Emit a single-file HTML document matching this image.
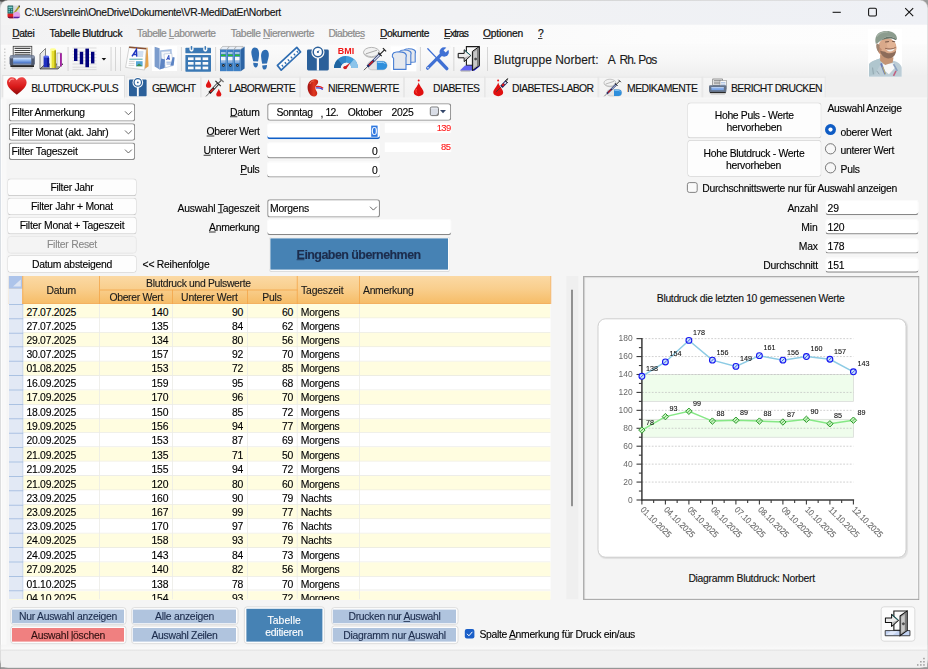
<!DOCTYPE html>
<html lang="de"><head><meta charset="utf-8"><title>VR-MediDatEr</title>
<style>
html,body{margin:0;padding:0;}
body{width:928px;height:669px;overflow:hidden;background:#969696;position:relative;font-family:"Liberation Sans",sans-serif;}
#stage{position:absolute;left:0;top:0;width:1160px;height:836.25px;transform:scale(.8);transform-origin:0 0;font-size:12px;color:#000;}
#stage div{position:absolute;box-sizing:border-box;}
#stage svg{position:absolute;overflow:visible;}
.t{white-space:nowrap;line-height:1;-webkit-text-stroke:0.15px currentColor;}
u{text-decoration:underline;text-underline-offset:1px;}
.combo{background:#fff;border-radius:3.5px;box-shadow:inset 0 0 0 1.35px #8c8c8c;}
.inp{background:#fff;border-radius:3px;box-shadow:inset 0 -1.5px 0 #878787, inset 0 0 0 1px #fafafa;}
.btn{background:#fdfdfd;border:1px solid #d4d4d4;border-bottom-color:#c2c2c2;border-radius:4.5px;}
.fbtn{border:1px solid #d6d6d6;border-radius:4px;background:#fdfdfd;}

</style></head><body>
<div id="stage">
<div style="left:0;top:0;width:1160px;height:1.5px;background:linear-gradient(90deg,#4e4e4e,#5c5c5c 60%,#9c9c9c)"></div>
<div style="left:0;top:1.6px;width:1.4px;height:834px;background:linear-gradient(#b0b4b8 0%,#8a96a4 15%,#6888a8 30%,#707880 50%,#8a8a8a 100%)"></div>
<div class="win" style="left:1.25px;top:1.25px;width:1157.5px;height:832.75px;background:#f5f5f5;border-radius:9px;overflow:hidden;box-shadow:0 0 0 1px rgba(255,255,255,.6);"></div>
<div style="left:1.25px;top:1.25px;width:1157.5px;height:29.25px;background:linear-gradient(90deg,#f3f3f4 0%,#f1f2f4 50%,#eef0f5 100%);border-radius:9px 9px 0 0;"></div>
<div class="t" style="letter-spacing:-0.476px;left:30.62px;top:15.5px;transform:translateY(-50%);font-size:13px;color:#111;">C:\Users\nrein\OneDrive\Dokumente\VR-MediDatEr\Norbert</div>
<div style="left:1.25px;top:30.5px;width:1157.5px;height:25.12px;background:linear-gradient(90deg,#f2f2f3 0%,#f6f6f7 30%,#fcfcfc 70%,#fdfdfd 100%);"></div>
<div style="left:1.25px;top:55.62px;width:1157.5px;height:37.5px;background:linear-gradient(#fbfbfb 0%,#f8f8f8 40%,#f0f0f0 100%);"></div>
<div style="left:1.25px;top:93.12px;width:1157.5px;height:28.87px;background:#efefef;"></div>
<div style="left:1.25px;top:124.25px;width:1.75px;height:688.75px;background:#fdfdfd;"></div>
<div style="left:3.0px;top:124.25px;width:5.0px;height:688.75px;background:#f9f9f9;"></div>
<div class="t" style="letter-spacing:-0.478px;left:15.38px;top:42.75px;transform:translateY(-50%);font-size:12.8px;-webkit-text-stroke:0.28px currentColor;color:#101010;"><u>D</u>atei</div>
<div class="t" style="letter-spacing:-0.387px;left:61.88px;top:42.75px;transform:translateY(-50%);font-size:12.8px;-webkit-text-stroke:0.28px currentColor;color:#101010;">Tabelle Blutdruck</div>
<div class="t" style="letter-spacing:-0.549px;left:171.25px;top:42.75px;transform:translateY(-50%);font-size:12.8px;-webkit-text-stroke:0.28px currentColor;color:#8c8c8c;">Tabelle <u>L</u>aborwerte</div>
<div class="t" style="letter-spacing:-0.479px;left:288.5px;top:42.75px;transform:translateY(-50%);font-size:12.8px;-webkit-text-stroke:0.28px currentColor;color:#8c8c8c;">Tabelle <u>N</u>ierenwerte</div>
<div class="t" style="letter-spacing:-0.689px;left:410.62px;top:42.75px;transform:translateY(-50%);font-size:12.8px;-webkit-text-stroke:0.28px currentColor;color:#8c8c8c;">Diabete<u>s</u></div>
<div class="t" style="letter-spacing:-0.467px;left:475.0px;top:42.75px;transform:translateY(-50%);font-size:12.8px;-webkit-text-stroke:0.28px currentColor;color:#101010;"><u>D</u>okumente</div>
<div class="t" style="letter-spacing:-1.047px;left:555.0px;top:42.75px;transform:translateY(-50%);font-size:12.8px;-webkit-text-stroke:0.28px currentColor;color:#101010;"><u>E</u>xtras</div>
<div class="t" style="letter-spacing:-0.244px;left:603.75px;top:42.75px;transform:translateY(-50%);font-size:12.8px;-webkit-text-stroke:0.28px currentColor;color:#101010;"><u>O</u>ptionen</div>
<div class="t" style="letter-spacing:-1.600px;left:672.5px;top:42.75px;transform:translateY(-50%);font-size:12.8px;-webkit-text-stroke:0.28px currentColor;color:#101010;"><u>?</u></div>
<div class="t" style="letter-spacing:-0.001px;left:617.25px;top:74.5px;transform:translateY(-50%);font-size:15px;color:#1a1a1a;">Blutgruppe Norbert:</div>
<div class="t" style="letter-spacing:0.734px;left:759.75px;top:74.5px;transform:translateY(-50%);font-size:15px;color:#1a1a1a;">A</div>
<div class="t" style="letter-spacing:-1.198px;left:774.5px;top:74.5px;transform:translateY(-50%);font-size:15px;color:#1a1a1a;">Rh.</div>
<div class="t" style="letter-spacing:-0.953px;left:797.75px;top:74.5px;transform:translateY(-50%);font-size:15px;color:#1a1a1a;">Pos</div>
<div style="left:157.5px;top:95.75px;width:93.0px;height:26.0px;background:linear-gradient(#f5f5f5,#f2f2f2);border:1px solid #e6e6e6;border-bottom:none;"></div>
<div class="t" style="letter-spacing:-1.056px;left:190.0px;top:109.62px;transform:translateY(-50%);font-size:13px;color:#111;">GEWICHT</div>
<div style="left:250.5px;top:95.75px;width:124.0px;height:26.0px;background:linear-gradient(#f5f5f5,#f2f2f2);border:1px solid #e6e6e6;border-bottom:none;"></div>
<div class="t" style="letter-spacing:-0.805px;left:286.25px;top:109.62px;transform:translateY(-50%);font-size:13px;color:#111;">LABORWERTE</div>
<div style="left:374.5px;top:95.75px;width:130.0px;height:26.0px;background:linear-gradient(#f5f5f5,#f2f2f2);border:1px solid #e6e6e6;border-bottom:none;"></div>
<div class="t" style="letter-spacing:-0.643px;left:410.0px;top:109.62px;transform:translateY(-50%);font-size:13px;color:#111;">NIERENWERTE</div>
<div style="left:504.5px;top:95.75px;width:101.0px;height:26.0px;background:linear-gradient(#f5f5f5,#f2f2f2);border:1px solid #e6e6e6;border-bottom:none;"></div>
<div class="t" style="letter-spacing:-0.787px;left:541.25px;top:109.62px;transform:translateY(-50%);font-size:13px;color:#111;">DIABETES</div>
<div style="left:605.5px;top:95.75px;width:142.5px;height:26.0px;background:linear-gradient(#f5f5f5,#f2f2f2);border:1px solid #e6e6e6;border-bottom:none;"></div>
<div class="t" style="letter-spacing:-0.782px;left:640.0px;top:109.62px;transform:translateY(-50%);font-size:13px;color:#111;">DIABETES-LABOR</div>
<div style="left:748.0px;top:95.75px;width:130.25px;height:26.0px;background:linear-gradient(#f5f5f5,#f2f2f2);border:1px solid #e6e6e6;border-bottom:none;"></div>
<div class="t" style="letter-spacing:-0.668px;left:783.75px;top:109.62px;transform:translateY(-50%);font-size:13px;color:#111;">MEDIKAMENTE</div>
<div style="left:878.25px;top:95.75px;width:153.75px;height:26.0px;background:linear-gradient(#f5f5f5,#f2f2f2);border:1px solid #e6e6e6;border-bottom:none;"></div>
<div class="t" style="letter-spacing:-0.731px;left:913.75px;top:109.62px;transform:translateY(-50%);font-size:13px;color:#111;">BERICHT DRUCKEN</div>
<div style="left:2.75px;top:94.0px;width:152.75px;height:29.0px;background:#fbfbfb;border:1px solid #dadada;border-bottom:none;"></div>
<div class="t" style="letter-spacing:-0.643px;left:39.0px;top:109.62px;transform:translateY(-50%);font-size:13px;color:#111;">BLUTDRUCK-PULS</div>
<div style="left:1.25px;top:121.75px;width:1157.5px;height:1.25px;background:#fafafa;"></div>
<div style="left:3.25px;top:121.5px;width:151.75px;height:1.75px;background:#fbfbfb;"></div>
<div class="combo" style="left:11.25px;top:129.38px;width:157.5px;height:23.12px;"></div>
<div class="t" style="letter-spacing:-0.407px;left:14.25px;top:141.19px;transform:translateY(-50%);font-size:13px;color:#000;">Filter Anmerkung</div>
<div class="combo" style="left:11.25px;top:153.5px;width:157.5px;height:22.75px;"></div>
<div class="t" style="letter-spacing:-0.396px;left:14.25px;top:165.12px;transform:translateY(-50%);font-size:13px;color:#000;">Filter Monat (akt. Jahr)</div>
<div class="combo" style="left:11.25px;top:177.5px;width:157.5px;height:22.5px;"></div>
<div class="t" style="letter-spacing:-0.277px;left:14.25px;top:189.0px;transform:translateY(-50%);font-size:13px;color:#000;">Filter Tageszeit</div>
<div class="btn" style="left:9.25px;top:222.75px;width:161.5px;height:22.25px;"></div>
<div class="t" style="letter-spacing:-0.368px;left:63.12px;top:234.25px;transform:translateY(-50%);font-size:13px;color:#000;">Filter Jahr</div>
<div class="btn" style="left:9.25px;top:247.0px;width:161.5px;height:21.75px;"></div>
<div class="t" style="letter-spacing:-0.329px;left:38.75px;top:258.25px;transform:translateY(-50%);font-size:13px;color:#000;">Filter Jahr + Monat</div>
<div class="btn" style="left:9.25px;top:271.0px;width:161.5px;height:21.75px;"></div>
<div class="t" style="letter-spacing:-0.308px;left:24.63px;top:282.25px;transform:translateY(-50%);font-size:13px;color:#000;">Filter Monat + Tageszeit</div>
<div class="btn" style="left:9.25px;top:295.0px;width:161.5px;height:21.5px;background:#f4f4f4;border-color:#e4e4e4;"></div>
<div class="t" style="letter-spacing:-0.331px;left:58.75px;top:306.12px;transform:translateY(-50%);font-size:13px;color:#000;color:#8a8a8a;">Filter Reset</div>
<div class="btn" style="left:9.25px;top:319.0px;width:161.5px;height:21.5px;"></div>
<div class="t" style="letter-spacing:-0.345px;left:40.0px;top:330.12px;transform:translateY(-50%);font-size:13px;color:#000;">Datum absteigend</div>
<div class="t" style="letter-spacing:-0.335px;left:178.25px;top:330.75px;transform:translateY(-50%);font-size:13px;color:#000;">&lt;&lt; Reihenfolge</div>
<div class="t" style="letter-spacing:-0.259px;left:287.5px;top:140.0px;transform:translateY(-50%);font-size:13px;color:#000;"><u>D</u>atum</div>
<div class="t" style="letter-spacing:-0.459px;left:258.25px;top:164.0px;transform:translateY(-50%);font-size:13px;color:#000;"><u>O</u>berer Wert</div>
<div class="t" style="letter-spacing:-0.348px;left:254.5px;top:188.0px;transform:translateY(-50%);font-size:13px;color:#000;"><u>U</u>nterer Wert</div>
<div class="t" style="letter-spacing:-0.262px;left:300.25px;top:212.0px;transform:translateY(-50%);font-size:13px;color:#000;"><u>P</u>uls</div>
<div class="t" style="letter-spacing:-0.290px;left:222.0px;top:260.0px;transform:translateY(-50%);font-size:13px;color:#000;">Auswahl <u>T</u>ageszeit</div>
<div class="t" style="letter-spacing:-0.359px;left:261.25px;top:283.75px;transform:translateY(-50%);font-size:13px;color:#000;"><u>A</u>nmerkung</div>
<div class="combo" style="left:334.0px;top:129.38px;width:230.0px;height:21.13px;"></div>
<div class="t" style="letter-spacing:-0.455px;left:345.5px;top:140.75px;transform:translateY(-50%);font-size:13px;color:#000;">Sonntag</div>
<div class="t" style="letter-spacing:-1.600px;left:400.75px;top:141.75px;transform:translateY(-50%);font-size:13px;color:#000;">,</div>
<div class="t" style="letter-spacing:-0.776px;left:406.75px;top:140.75px;transform:translateY(-50%);font-size:13px;color:#000;">12.</div>
<div class="t" style="letter-spacing:-0.500px;left:434.75px;top:140.75px;transform:translateY(-50%);font-size:13px;color:#000;">Oktober</div>
<div class="t" style="letter-spacing:-0.355px;left:489.5px;top:140.75px;transform:translateY(-50%);font-size:13px;color:#000;">2025</div>
<div class="inp" style="left:334.0px;top:154.0px;width:141.0px;height:20.0px;box-shadow:inset 0 -2px 0 #0f5fc8, inset 0 0 0 1px #fafafa;"></div>
<div style="left:464.0px;top:156.88px;width:7.75px;height:14.13px;background:#2f78e0;"></div>
<div class="t" style="left:464.5px;top:164.25px;transform:translateY(-50%);font-size:13px;color:#fff;">0</div>
<div class="inp" style="left:334.0px;top:177.88px;width:141.0px;height:20.5px;"></div>
<div class="inp" style="left:334.0px;top:201.88px;width:141.0px;height:20.0px;"></div>
<div class="t" style="right:687.88px;top:188.62px;transform:translateY(-50%);font-size:13px;">0</div>
<div class="t" style="right:687.88px;top:212.62px;transform:translateY(-50%);font-size:13px;">0</div>
<div style="left:480.75px;top:154.25px;width:83.0px;height:12.0px;background:#fff;"></div>
<div style="left:480.75px;top:178.25px;width:83.0px;height:12.0px;background:#fff;"></div>
<div class="t" style="letter-spacing:-0.856px;left:546.0px;top:160.88px;transform:translateY(-50%);font-size:11.8px;color:#ff2020;">139</div>
<div class="t" style="letter-spacing:-0.562px;left:551.12px;top:184.88px;transform:translateY(-50%);font-size:11.8px;color:#ff2020;">85</div>
<div class="combo" style="left:334.0px;top:248.75px;width:141.0px;height:22.75px;"></div>
<div class="t" style="letter-spacing:-0.261px;left:337.5px;top:260.38px;transform:translateY(-50%);font-size:13px;color:#000;">Morgens</div>
<div class="inp" style="left:334.0px;top:273.5px;width:229.75px;height:20.0px;"></div>
<div style="left:335.5px;top:295.5px;width:227.25px;height:44.0px;background:#fbfbfb;border:1px solid #e4e4e4;border-bottom-color:#d4d4d4;border-radius:4px;"></div>
<div style="left:338.25px;top:297.75px;width:221.5px;height:39.25px;background:#4682b4;"></div>
<div class="t" style="letter-spacing:-0.690px;left:370.75px;top:318.0px;transform:translateY(-50%);font-size:15.6px;font-weight:bold;color:#1c2c4c;"><u>E</u>ingaben übernehmen</div>
<div class="btn" style="left:858.5px;top:127.75px;width:168.75px;height:45.5px;"></div>
<div class="t" style="letter-spacing:-0.425px;left:893.5px;top:143.75px;transform:translateY(-50%);font-size:13px;color:#000;">Hohe Puls - Werte</div>
<div class="t" style="letter-spacing:-0.386px;left:908.25px;top:158.75px;transform:translateY(-50%);font-size:13px;color:#000;">hervorheben</div>
<div class="btn" style="left:858.5px;top:175.25px;width:168.75px;height:45.75px;"></div>
<div class="t" style="letter-spacing:-0.403px;left:879.5px;top:191.75px;transform:translateY(-50%);font-size:13px;color:#000;">Hohe Blutdruck - Werte</div>
<div class="t" style="letter-spacing:-0.386px;left:907.5px;top:206.5px;transform:translateY(-50%);font-size:13px;color:#000;">hervorheben</div>
<div class="t" style="letter-spacing:-0.418px;left:1034.25px;top:135.25px;transform:translateY(-50%);font-size:13px;color:#000;">Auswahl Anzeige</div>
<div class="t" style="letter-spacing:-0.423px;left:1050.75px;top:164.5px;transform:translateY(-50%);font-size:13px;color:#000;">oberer Wert</div>
<div class="t" style="letter-spacing:-0.439px;left:1050.75px;top:188.0px;transform:translateY(-50%);font-size:13px;color:#000;">unterer Wert</div>
<div class="t" style="letter-spacing:-0.324px;left:1050.75px;top:212.0px;transform:translateY(-50%);font-size:13px;color:#000;">Puls</div>
<div class="t" style="letter-spacing:-0.387px;left:877.75px;top:234.75px;transform:translateY(-50%);font-size:13px;color:#000;">Durchschnittswerte nur für Auswahl anzeigen</div>
<div class="inp" style="left:1032.25px;top:250.0px;width:116.0px;height:19.25px;"></div>
<div class="t" style="letter-spacing:-0.292px;left:984.25px;top:260.12px;transform:translateY(-50%);font-size:13px;color:#000;">Anzahl</div>
<div class="t" style="left:1034.5px;top:260.38px;transform:translateY(-50%);font-size:13px;letter-spacing:-0.3px;">29</div>
<div class="inp" style="left:1032.25px;top:274.12px;width:116.0px;height:19.12px;"></div>
<div class="t" style="letter-spacing:-0.068px;left:1001.5px;top:284.19px;transform:translateY(-50%);font-size:13px;color:#000;">Min</div>
<div class="t" style="left:1034.5px;top:284.44px;transform:translateY(-50%);font-size:13px;letter-spacing:-0.3px;">120</div>
<div class="inp" style="left:1032.25px;top:298.0px;width:116.0px;height:19.12px;"></div>
<div class="t" style="letter-spacing:-0.271px;left:998.5px;top:308.06px;transform:translateY(-50%);font-size:13px;color:#000;">Max</div>
<div class="t" style="left:1034.5px;top:308.31px;transform:translateY(-50%);font-size:13px;letter-spacing:-0.3px;">178</div>
<div class="inp" style="left:1032.25px;top:321.88px;width:116.0px;height:19.38px;"></div>
<div class="t" style="letter-spacing:-0.333px;left:954.0px;top:332.06px;transform:translateY(-50%);font-size:13px;color:#000;">Durchschnitt</div>
<div class="t" style="left:1034.5px;top:332.31px;transform:translateY(-50%);font-size:13px;letter-spacing:-0.3px;">151</div>
<div class="grid" style="left:11.25px;top:344.5px;width:677.0px;height:404.75px;background:#fff;overflow:hidden;"></div>
<div style="left:11.25px;top:344.5px;width:677.0px;height:35.5px;background:linear-gradient(#fbd9a4 0%,#f9cf8e 45%,#f6bd68 100%);border-bottom:1px solid #f0a040;"></div>
<div style="left:11.25px;top:344.5px;width:17.0px;height:16.75px;background:#adc4ea;"></div>
<div style="left:11.25px;top:361.25px;width:17.0px;height:18.75px;background:#e3eaf6;"></div>
<div style="left:28.0px;top:344.5px;width:1.0px;height:35.5px;background:#f3a64a;"></div>
<div style="left:124.25px;top:344.5px;width:1.0px;height:35.5px;background:#f3a64a;"></div>
<div style="left:371.25px;top:344.5px;width:1.0px;height:35.5px;background:#f3a64a;"></div>
<div style="left:448.5px;top:344.5px;width:1.0px;height:35.5px;background:#f3a64a;"></div>
<div style="left:687.5px;top:344.5px;width:1.0px;height:35.5px;background:#f3a64a;"></div>
<div style="left:215.25px;top:362.25px;width:1.0px;height:17.75px;background:#f3a64a;"></div>
<div style="left:308.75px;top:362.25px;width:1.0px;height:17.75px;background:#f3a64a;"></div>
<div style="left:124.75px;top:361.75px;width:247.0px;height:1.0px;background:#f3a64a;"></div>
<div class="t" style="letter-spacing:-0.259px;left:58.0px;top:363.25px;transform:translateY(-50%);font-size:13px;color:#1a1a1a;">Datum</div>
<div class="t" style="letter-spacing:-0.410px;left:182.63px;top:353.75px;transform:translateY(-50%);font-size:13px;color:#1a1a1a;">Blutdruck und Pulswerte</div>
<div class="t" style="letter-spacing:-0.389px;left:136.75px;top:371.75px;transform:translateY(-50%);font-size:13px;color:#1a1a1a;">Oberer Wert</div>
<div class="t" style="letter-spacing:-0.285px;left:226.38px;top:371.75px;transform:translateY(-50%);font-size:13px;color:#1a1a1a;">Unterer Wert</div>
<div class="t" style="letter-spacing:-0.262px;left:327.88px;top:371.75px;transform:translateY(-50%);font-size:13px;color:#1a1a1a;">Puls</div>
<div class="t" style="letter-spacing:-0.214px;left:376.25px;top:363.25px;transform:translateY(-50%);font-size:13px;color:#1a1a1a;">Tageszeit</div>
<div class="t" style="letter-spacing:-0.387px;left:453.75px;top:363.25px;transform:translateY(-50%);font-size:13px;color:#1a1a1a;">Anmerkung</div>
<div style="left:11.25px;top:344.5px;width:677.0px;height:404.75px;overflow:hidden;font-size:13px;letter-spacing:-0.31px;"><div style="left:0;top:35.75px;width:677.0px;height:17.91px;background:#fffde0;border-bottom:1px solid #e9e9e4;"><div class="t" style="left:21.75px;top:50%;transform:translateY(-42%);">27.07.2025</div><div class="t" style="right:478.0px;top:50%;transform:translateY(-42%);">140</div><div class="t" style="right:384.5px;top:50%;transform:translateY(-42%);">90</div><div class="t" style="right:322.0px;top:50%;transform:translateY(-42%);">60</div><div class="t" style="left:364.75px;top:50%;transform:translateY(-42%);">Morgens</div></div><div style="left:0;top:53.66px;width:677.0px;height:17.91px;background:#ffffff;border-bottom:1px solid #e9e9e4;"><div class="t" style="left:21.75px;top:50%;transform:translateY(-42%);">27.07.2025</div><div class="t" style="right:478.0px;top:50%;transform:translateY(-42%);">135</div><div class="t" style="right:384.5px;top:50%;transform:translateY(-42%);">84</div><div class="t" style="right:322.0px;top:50%;transform:translateY(-42%);">62</div><div class="t" style="left:364.75px;top:50%;transform:translateY(-42%);">Morgens</div></div><div style="left:0;top:71.57px;width:677.0px;height:17.91px;background:#fffde0;border-bottom:1px solid #e9e9e4;"><div class="t" style="left:21.75px;top:50%;transform:translateY(-42%);">29.07.2025</div><div class="t" style="right:478.0px;top:50%;transform:translateY(-42%);">134</div><div class="t" style="right:384.5px;top:50%;transform:translateY(-42%);">80</div><div class="t" style="right:322.0px;top:50%;transform:translateY(-42%);">56</div><div class="t" style="left:364.75px;top:50%;transform:translateY(-42%);">Morgens</div></div><div style="left:0;top:89.49px;width:677.0px;height:17.91px;background:#ffffff;border-bottom:1px solid #e9e9e4;"><div class="t" style="left:21.75px;top:50%;transform:translateY(-42%);">30.07.2025</div><div class="t" style="right:478.0px;top:50%;transform:translateY(-42%);">157</div><div class="t" style="right:384.5px;top:50%;transform:translateY(-42%);">92</div><div class="t" style="right:322.0px;top:50%;transform:translateY(-42%);">70</div><div class="t" style="left:364.75px;top:50%;transform:translateY(-42%);">Morgens</div></div><div style="left:0;top:107.4px;width:677.0px;height:17.91px;background:#fffde0;border-bottom:1px solid #e9e9e4;"><div class="t" style="left:21.75px;top:50%;transform:translateY(-42%);">01.08.2025</div><div class="t" style="right:478.0px;top:50%;transform:translateY(-42%);">153</div><div class="t" style="right:384.5px;top:50%;transform:translateY(-42%);">72</div><div class="t" style="right:322.0px;top:50%;transform:translateY(-42%);">85</div><div class="t" style="left:364.75px;top:50%;transform:translateY(-42%);">Morgens</div></div><div style="left:0;top:125.31px;width:677.0px;height:17.91px;background:#ffffff;border-bottom:1px solid #e9e9e4;"><div class="t" style="left:21.75px;top:50%;transform:translateY(-42%);">16.09.2025</div><div class="t" style="right:478.0px;top:50%;transform:translateY(-42%);">159</div><div class="t" style="right:384.5px;top:50%;transform:translateY(-42%);">95</div><div class="t" style="right:322.0px;top:50%;transform:translateY(-42%);">68</div><div class="t" style="left:364.75px;top:50%;transform:translateY(-42%);">Morgens</div></div><div style="left:0;top:143.22px;width:677.0px;height:17.91px;background:#fffde0;border-bottom:1px solid #e9e9e4;"><div class="t" style="left:21.75px;top:50%;transform:translateY(-42%);">17.09.2025</div><div class="t" style="right:478.0px;top:50%;transform:translateY(-42%);">170</div><div class="t" style="right:384.5px;top:50%;transform:translateY(-42%);">96</div><div class="t" style="right:322.0px;top:50%;transform:translateY(-42%);">70</div><div class="t" style="left:364.75px;top:50%;transform:translateY(-42%);">Morgens</div></div><div style="left:0;top:161.14px;width:677.0px;height:17.91px;background:#ffffff;border-bottom:1px solid #e9e9e4;"><div class="t" style="left:21.75px;top:50%;transform:translateY(-42%);">18.09.2025</div><div class="t" style="right:478.0px;top:50%;transform:translateY(-42%);">150</div><div class="t" style="right:384.5px;top:50%;transform:translateY(-42%);">85</div><div class="t" style="right:322.0px;top:50%;transform:translateY(-42%);">72</div><div class="t" style="left:364.75px;top:50%;transform:translateY(-42%);">Morgens</div></div><div style="left:0;top:179.05px;width:677.0px;height:17.91px;background:#fffde0;border-bottom:1px solid #e9e9e4;"><div class="t" style="left:21.75px;top:50%;transform:translateY(-42%);">19.09.2025</div><div class="t" style="right:478.0px;top:50%;transform:translateY(-42%);">156</div><div class="t" style="right:384.5px;top:50%;transform:translateY(-42%);">94</div><div class="t" style="right:322.0px;top:50%;transform:translateY(-42%);">77</div><div class="t" style="left:364.75px;top:50%;transform:translateY(-42%);">Morgens</div></div><div style="left:0;top:196.96px;width:677.0px;height:17.91px;background:#ffffff;border-bottom:1px solid #e9e9e4;"><div class="t" style="left:21.75px;top:50%;transform:translateY(-42%);">20.09.2025</div><div class="t" style="right:478.0px;top:50%;transform:translateY(-42%);">153</div><div class="t" style="right:384.5px;top:50%;transform:translateY(-42%);">87</div><div class="t" style="right:322.0px;top:50%;transform:translateY(-42%);">69</div><div class="t" style="left:364.75px;top:50%;transform:translateY(-42%);">Morgens</div></div><div style="left:0;top:214.87px;width:677.0px;height:17.91px;background:#fffde0;border-bottom:1px solid #e9e9e4;"><div class="t" style="left:21.75px;top:50%;transform:translateY(-42%);">21.09.2025</div><div class="t" style="right:478.0px;top:50%;transform:translateY(-42%);">135</div><div class="t" style="right:384.5px;top:50%;transform:translateY(-42%);">71</div><div class="t" style="right:322.0px;top:50%;transform:translateY(-42%);">50</div><div class="t" style="left:364.75px;top:50%;transform:translateY(-42%);">Morgens</div></div><div style="left:0;top:232.79px;width:677.0px;height:17.91px;background:#ffffff;border-bottom:1px solid #e9e9e4;"><div class="t" style="left:21.75px;top:50%;transform:translateY(-42%);">21.09.2025</div><div class="t" style="right:478.0px;top:50%;transform:translateY(-42%);">155</div><div class="t" style="right:384.5px;top:50%;transform:translateY(-42%);">94</div><div class="t" style="right:322.0px;top:50%;transform:translateY(-42%);">72</div><div class="t" style="left:364.75px;top:50%;transform:translateY(-42%);">Morgens</div></div><div style="left:0;top:250.7px;width:677.0px;height:17.91px;background:#fffde0;border-bottom:1px solid #e9e9e4;"><div class="t" style="left:21.75px;top:50%;transform:translateY(-42%);">21.09.2025</div><div class="t" style="right:478.0px;top:50%;transform:translateY(-42%);">120</div><div class="t" style="right:384.5px;top:50%;transform:translateY(-42%);">80</div><div class="t" style="right:322.0px;top:50%;transform:translateY(-42%);">60</div><div class="t" style="left:364.75px;top:50%;transform:translateY(-42%);">Morgens</div></div><div style="left:0;top:268.61px;width:677.0px;height:17.91px;background:#ffffff;border-bottom:1px solid #e9e9e4;"><div class="t" style="left:21.75px;top:50%;transform:translateY(-42%);">23.09.2025</div><div class="t" style="right:478.0px;top:50%;transform:translateY(-42%);">160</div><div class="t" style="right:384.5px;top:50%;transform:translateY(-42%);">90</div><div class="t" style="right:322.0px;top:50%;transform:translateY(-42%);">79</div><div class="t" style="left:364.75px;top:50%;transform:translateY(-42%);">Nachts</div></div><div style="left:0;top:286.52px;width:677.0px;height:17.91px;background:#fffde0;border-bottom:1px solid #e9e9e4;"><div class="t" style="left:21.75px;top:50%;transform:translateY(-42%);">23.09.2025</div><div class="t" style="right:478.0px;top:50%;transform:translateY(-42%);">167</div><div class="t" style="right:384.5px;top:50%;transform:translateY(-42%);">99</div><div class="t" style="right:322.0px;top:50%;transform:translateY(-42%);">77</div><div class="t" style="left:364.75px;top:50%;transform:translateY(-42%);">Nachts</div></div><div style="left:0;top:304.44px;width:677.0px;height:17.91px;background:#ffffff;border-bottom:1px solid #e9e9e4;"><div class="t" style="left:21.75px;top:50%;transform:translateY(-42%);">23.09.2025</div><div class="t" style="right:478.0px;top:50%;transform:translateY(-42%);">170</div><div class="t" style="right:384.5px;top:50%;transform:translateY(-42%);">97</div><div class="t" style="right:322.0px;top:50%;transform:translateY(-42%);">76</div><div class="t" style="left:364.75px;top:50%;transform:translateY(-42%);">Nachts</div></div><div style="left:0;top:322.35px;width:677.0px;height:17.91px;background:#fffde0;border-bottom:1px solid #e9e9e4;"><div class="t" style="left:21.75px;top:50%;transform:translateY(-42%);">24.09.2025</div><div class="t" style="right:478.0px;top:50%;transform:translateY(-42%);">158</div><div class="t" style="right:384.5px;top:50%;transform:translateY(-42%);">93</div><div class="t" style="right:322.0px;top:50%;transform:translateY(-42%);">79</div><div class="t" style="left:364.75px;top:50%;transform:translateY(-42%);">Nachts</div></div><div style="left:0;top:340.26px;width:677.0px;height:17.91px;background:#ffffff;border-bottom:1px solid #e9e9e4;"><div class="t" style="left:21.75px;top:50%;transform:translateY(-42%);">24.09.2025</div><div class="t" style="right:478.0px;top:50%;transform:translateY(-42%);">143</div><div class="t" style="right:384.5px;top:50%;transform:translateY(-42%);">84</div><div class="t" style="right:322.0px;top:50%;transform:translateY(-42%);">73</div><div class="t" style="left:364.75px;top:50%;transform:translateY(-42%);">Morgens</div></div><div style="left:0;top:358.17px;width:677.0px;height:17.91px;background:#fffde0;border-bottom:1px solid #e9e9e4;"><div class="t" style="left:21.75px;top:50%;transform:translateY(-42%);">27.09.2025</div><div class="t" style="right:478.0px;top:50%;transform:translateY(-42%);">140</div><div class="t" style="right:384.5px;top:50%;transform:translateY(-42%);">82</div><div class="t" style="right:322.0px;top:50%;transform:translateY(-42%);">56</div><div class="t" style="left:364.75px;top:50%;transform:translateY(-42%);">Morgens</div></div><div style="left:0;top:376.09px;width:677.0px;height:17.91px;background:#ffffff;border-bottom:1px solid #e9e9e4;"><div class="t" style="left:21.75px;top:50%;transform:translateY(-42%);">01.10.2025</div><div class="t" style="right:478.0px;top:50%;transform:translateY(-42%);">138</div><div class="t" style="right:384.5px;top:50%;transform:translateY(-42%);">78</div><div class="t" style="right:322.0px;top:50%;transform:translateY(-42%);">70</div><div class="t" style="left:364.75px;top:50%;transform:translateY(-42%);">Morgens</div></div><div style="left:0;top:394.0px;width:677.0px;height:17.91px;background:#fffde0;border-bottom:1px solid #e9e9e4;"><div class="t" style="left:21.75px;top:50%;transform:translateY(-42%);">04.10.2025</div><div class="t" style="right:478.0px;top:50%;transform:translateY(-42%);">154</div><div class="t" style="right:384.5px;top:50%;transform:translateY(-42%);">93</div><div class="t" style="right:322.0px;top:50%;transform:translateY(-42%);">72</div><div class="t" style="left:364.75px;top:50%;transform:translateY(-42%);">Morgens</div></div><div style="left:0;top:35.5px;width:17.25px;height:369.25px;background:#e2e9f5;border-right:1px solid #c4d2e8;"></div><div style="left:0;top:35.25px;width:17.25px;height:1px;background:#9db8de;"></div><div style="left:0;top:53.16px;width:17.25px;height:1px;background:#9db8de;"></div><div style="left:0;top:71.07px;width:17.25px;height:1px;background:#9db8de;"></div><div style="left:0;top:88.99px;width:17.25px;height:1px;background:#9db8de;"></div><div style="left:0;top:106.9px;width:17.25px;height:1px;background:#9db8de;"></div><div style="left:0;top:124.81px;width:17.25px;height:1px;background:#9db8de;"></div><div style="left:0;top:142.72px;width:17.25px;height:1px;background:#9db8de;"></div><div style="left:0;top:160.64px;width:17.25px;height:1px;background:#9db8de;"></div><div style="left:0;top:178.55px;width:17.25px;height:1px;background:#9db8de;"></div><div style="left:0;top:196.46px;width:17.25px;height:1px;background:#9db8de;"></div><div style="left:0;top:214.37px;width:17.25px;height:1px;background:#9db8de;"></div><div style="left:0;top:232.29px;width:17.25px;height:1px;background:#9db8de;"></div><div style="left:0;top:250.2px;width:17.25px;height:1px;background:#9db8de;"></div><div style="left:0;top:268.11px;width:17.25px;height:1px;background:#9db8de;"></div><div style="left:0;top:286.02px;width:17.25px;height:1px;background:#9db8de;"></div><div style="left:0;top:303.94px;width:17.25px;height:1px;background:#9db8de;"></div><div style="left:0;top:321.85px;width:17.25px;height:1px;background:#9db8de;"></div><div style="left:0;top:339.76px;width:17.25px;height:1px;background:#9db8de;"></div><div style="left:0;top:357.67px;width:17.25px;height:1px;background:#9db8de;"></div><div style="left:0;top:375.59px;width:17.25px;height:1px;background:#9db8de;"></div><div style="left:0;top:393.5px;width:17.25px;height:1px;background:#9db8de;"></div><div style="left:0;top:411.41px;width:17.25px;height:1px;background:#9db8de;"></div><div style="left:113.0px;top:35.5px;width:1px;height:369.25px;background:#ecece6;"></div><div style="left:204.0px;top:35.5px;width:1px;height:369.25px;background:#ecece6;"></div><div style="left:297.5px;top:35.5px;width:1px;height:369.25px;background:#ecece6;"></div><div style="left:360.0px;top:35.5px;width:1px;height:369.25px;background:#ecece6;"></div><div style="left:437.25px;top:35.5px;width:1px;height:369.25px;background:#ecece6;"></div></div>
<div style="left:707.5px;top:345.0px;width:15.75px;height:404.25px;background:#efefef;"></div>
<div style="left:713.75px;top:361.75px;width:2.0px;height:271.25px;background:#7a7a7a;border-radius:1px;"></div>
<div style="left:728.75px;top:344.75px;width:420.5px;height:405.0px;background:#f4f4f4;border:1px solid #9c9c9c;box-shadow:inset 0.6px 0.6px 0 #b4b4b4, inset -0.6px -0.6px 0 #b4b4b4, inset 1.8px 1.8px 0 #ececec, inset -1.8px -1.8px 0 #fdfdfd;"></div>
<div class="t" style="letter-spacing:-0.408px;left:821.0px;top:373.25px;transform:translateY(-50%);font-size:13px;color:#111;">Blutdruck die letzten 10 gemessenen Werte</div>
<div class="t" style="letter-spacing:-0.383px;left:860.5px;top:722.5px;transform:translateY(-50%);font-size:13px;color:#111;">Diagramm Blutdruck: Norbert</div>
<div style="left:746.5px;top:398.0px;width:386.25px;height:299.0px;background:#fff;border:1px solid #c4c4c4;border-radius:10px;box-shadow:1px 1px 1px rgba(0,0,0,.08);"></div>
<div class="fbtn" style="left:12.75px;top:759.13px;width:144.75px;height:22.12px;"></div>
<div style="left:15.0px;top:761.5px;width:140.0px;height:17.37px;background:#b0c4de;"></div>
<div class="t" style="letter-spacing:-0.343px;left:23.75px;top:770.69px;transform:translateY(-50%);font-size:13px;color:#1c2c4c;">Nur Auswahl anzeigen</div>
<div class="fbtn" style="left:12.75px;top:782.12px;width:144.75px;height:22.5px;"></div>
<div style="left:15.0px;top:784.5px;width:140.0px;height:17.75px;background:#f08080;"></div>
<div class="t" style="letter-spacing:-0.338px;left:38.75px;top:793.88px;transform:translateY(-50%);font-size:13px;color:#301010;">Auswahl <u>l</u>öschen</div>
<div class="fbtn" style="left:164.0px;top:759.13px;width:133.5px;height:22.12px;"></div>
<div style="left:166.25px;top:761.5px;width:128.75px;height:17.37px;background:#b0c4de;"></div>
<div class="t" style="letter-spacing:-0.332px;left:193.75px;top:770.69px;transform:translateY(-50%);font-size:13px;color:#1c2c4c;">Alle anzeigen</div>
<div class="fbtn" style="left:164.0px;top:782.12px;width:133.5px;height:22.5px;"></div>
<div style="left:166.25px;top:784.5px;width:128.75px;height:17.75px;background:#b0c4de;"></div>
<div class="t" style="letter-spacing:-0.404px;left:189.38px;top:793.88px;transform:translateY(-50%);font-size:13px;color:#1c2c4c;">Auswahl Zeilen</div>
<div class="fbtn" style="left:304.75px;top:758.25px;width:101.0px;height:47.0px;"></div>
<div style="left:307.5px;top:761.25px;width:95.5px;height:40.75px;background:#4682b4;"></div>
<div class="t" style="letter-spacing:0.078px;left:334.38px;top:775.25px;transform:translateY(-50%);font-size:13px;color:#fff;">Tabelle</div>
<div class="t" style="letter-spacing:-0.264px;left:331.5px;top:790.25px;transform:translateY(-50%);font-size:13px;color:#fff;">editieren</div>
<div class="fbtn" style="left:414.0px;top:759.13px;width:158.5px;height:22.12px;"></div>
<div style="left:416.25px;top:761.5px;width:153.75px;height:17.37px;background:#b0c4de;"></div>
<div class="t" style="letter-spacing:-0.413px;left:435.62px;top:770.69px;transform:translateY(-50%);font-size:13px;color:#1c2c4c;">Drucken nur <u>A</u>uswahl</div>
<div class="fbtn" style="left:414.0px;top:782.12px;width:158.5px;height:22.5px;"></div>
<div style="left:416.25px;top:784.5px;width:153.75px;height:17.75px;background:#b0c4de;"></div>
<div class="t" style="letter-spacing:-0.307px;left:429.0px;top:793.88px;transform:translateY(-50%);font-size:13px;color:#1c2c4c;">Diagramm nur <u>A</u>uswahl</div>
<div class="t" style="letter-spacing:-0.401px;left:599.25px;top:792.88px;transform:translateY(-50%);font-size:13px;color:#000;">Spalte <u>A</u>nmerkung für Druck ein/aus</div>
<div style="left:1101.0px;top:757.75px;width:43.25px;height:44.0px;background:#fcfcfc;border:1px solid #d4d4d4;border-radius:4px;"></div>
<div style="left:1.25px;top:805.75px;width:1157.5px;height:6.75px;background:linear-gradient(#f5f5f5,#fbfbfb);"></div>
<div style="left:1.25px;top:812.25px;width:1157.5px;height:1.5px;background:linear-gradient(#e2e2e2,#ececec);"></div>
<div style="left:1.25px;top:813.75px;width:1157.5px;height:20.0px;background:#f1f1f1;"></div>
<svg id="ov" style="left:0;top:0" width="1160" height="836.25" viewBox="0 0 928 669">
<g transform="translate(7.2,4.9) scale(1.05)">
<rect x="0.3" y="0.5" width="5.6" height="8" rx="0.6" fill="#1f5c5c"/>
<rect x="1.1" y="1.6" width="4" height="1.6" fill="#7fd0cc"/>
<rect x="1.1" y="3.8" width="1.6" height="1.4" fill="#5fbcb8"/><rect x="3.4" y="3.8" width="1.6" height="1.4" fill="#5fbcb8"/>
<rect x="1.1" y="5.8" width="1.6" height="1.4" fill="#5fbcb8"/><rect x="3.4" y="5.8" width="1.6" height="1.4" fill="#5fbcb8"/>
<rect x="6" y="0.6" width="6" height="8" fill="#d8d8dc"/>
<path d="M6.4 8.2 L11.6 1.2" stroke="#a8a020" stroke-width="1.5"/>
<path d="M10.6 0.8 L12.2 0.6 L12 2.4" fill="#333"/>
<path d="M0.3 8.5 H6 V12.6 H2.2 Q0.3 12.6 0.3 10.6 Z" fill="#e02020"/>
<path d="M0.3 11.2 H6 V12.6 H2.2 Q0.5 12.6 0.3 11.2 Z" fill="#7a1040"/>
<path d="M6 8.5 Q6.4 6.6 8.6 6.6 Q12.4 6.8 12.4 10.4 Q12.4 12.6 10.4 12.6 H6 Z" fill="#e3a0ea"/>
<path d="M6 11.4 H12.2 Q11.8 12.6 10.4 12.6 H6 Z" fill="#5a20a0"/>
</g>
<path d="M832.6 12.3 H840.8" stroke="#111" stroke-width="1.05" fill="none"/>
<rect x="868.6" y="8.2" width="7.8" height="7.8" rx="1.2" stroke="#111" stroke-width="1.05" fill="none"/>
<path d="M905.2 8.2 L913.2 16.2 M913.2 8.2 L905.2 16.2" stroke="#111" stroke-width="1.05" fill="none"/>
<rect x="4.2" y="48.5" width="1.2" height="1.4" fill="#c4c4c4"/>
<rect x="4.2" y="51.7" width="1.2" height="1.4" fill="#c4c4c4"/>
<rect x="4.2" y="54.9" width="1.2" height="1.4" fill="#c4c4c4"/>
<rect x="4.2" y="58.1" width="1.2" height="1.4" fill="#c4c4c4"/>
<rect x="4.2" y="61.3" width="1.2" height="1.4" fill="#c4c4c4"/>
<rect x="4.2" y="64.5" width="1.2" height="1.4" fill="#c4c4c4"/>
<rect x="4.2" y="67.7" width="1.2" height="1.4" fill="#c4c4c4"/>
<defs><linearGradient id="tray" x1="0" y1="0" x2="0" y2="1"><stop offset="0" stop-color="#dbe8fb"/><stop offset="0.45" stop-color="#8db4ee"/><stop offset="1" stop-color="#3f6cc4"/></linearGradient></defs>
<g transform="translate(9,46)">
<rect x="4.2" y="0.3" width="18.6" height="11.4" fill="#f6f6f6" stroke="#3a3a3a" stroke-width="0.8"/>
<g stroke="#4a4a4a" stroke-width="1.2"><path d="M5.6 2.3H21.4M5.6 4.5H21.4M5.6 6.7H21.4M5.6 8.9H21.4"/></g>
<rect x="0.6" y="9.2" width="25.2" height="10.4" rx="2.2" fill="#4f5a70"/>
<rect x="4.2" y="9.2" width="18" height="10.4" fill="#7f8ea8"/>
<rect x="1" y="9.6" width="3" height="3" rx="1" fill="#8a96ac"/><rect x="22.4" y="9.6" width="3" height="3" rx="1" fill="#8a96ac"/>
<rect x="4.2" y="11.8" width="18" height="5.6" fill="url(#tray)"/>
<rect x="1.4" y="19.2" width="23.6" height="1.8" fill="#262626"/>
<rect x="2.6" y="21" width="21.2" height="2.2" fill="#cdcdcd"/>
</g>
<g transform="translate(39,46)">
<path d="M1 8 L6.5 2.5 V18 L1 23 Z" fill="#e8e8e8" stroke="#555" stroke-width="0.7"/>
<path d="M1 23 L6.5 18 H24 L19 23 Z" fill="#9a9a9a" stroke="#333" stroke-width="0.7"/>
<rect x="4.6" y="10.6" width="5.4" height="10.6" fill="#2030c0"/><ellipse cx="7.3" cy="10.6" rx="2.7" ry="1.2" fill="#5a6af0"/>
<rect x="8.2" y="12" width="2" height="9" fill="#101890"/>
<rect x="11" y="3.6" width="6" height="18.4" fill="#e8e030"/><ellipse cx="14" cy="3.6" rx="3" ry="1.4" fill="#ffff90"/>
<rect x="15.4" y="4.4" width="1.6" height="17.6" fill="#a8a010"/>
<rect x="11" y="3.6" width="1.6" height="18.4" fill="#ffffb0"/>
<rect x="18" y="7" width="4.6" height="13.6" fill="#f0f0f0" stroke="#666" stroke-width="0.4"/>
<rect x="21" y="7.2" width="1.8" height="13.2" fill="#a020a0"/>
</g>
<rect x="67.6" y="47" width="0.9" height="24" fill="#d2d2d2"/>
<g stroke="#d0d0d0" stroke-width="0.7"><path d="M72.5 48H96.5"/><path d="M72.5 51.2H96.5"/><path d="M72.5 54.4H96.5"/><path d="M72.5 57.6H96.5"/><path d="M72.5 60.8H96.5"/><path d="M72.5 64H96.5"/><path d="M72.5 67.2H96.5"/><path d="M72.5 69.6H96.5"/></g>
<g fill="#00007c"><rect x="74" y="48.6" width="3.4" height="12.4"/><rect x="79.8" y="51.8" width="3.4" height="12.4"/><rect x="85.4" y="48.6" width="3.6" height="18.6"/><rect x="91" y="51.8" width="3.4" height="11.6"/></g>
<path d="M101.6 58 H106.2 L103.9 60.6 Z" fill="#111"/>
<rect x="110.6" y="47" width="0.9" height="24" fill="#d2d2d2"/>
<rect x="115.1" y="47" width="0.9" height="24" fill="#d2d2d2"/>
<rect x="120.0" y="47" width="0.9" height="24" fill="#d2d2d2"/>
<g transform="translate(124,46)">
<path d="M18 2.4 L23.6 1.6 L24.6 20.2 L20 23.4 Z" fill="#e6a24a"/>
<path d="M5.2 0.6 L22.4 2 L20.6 24 L1.6 21.4 Z" fill="#fdfdfd" stroke="#b8b8b8" stroke-width="0.6"/>
<path d="M5.2 0.6 L22.4 2 L22.2 3.4 L5 2 Z" fill="#8a5030"/>
<path d="M8 10.4 L12.4 3.6 L12.8 10.6 M9.2 8.4 H13" stroke="#2038c0" stroke-width="1.5" fill="none"/>
<path d="M13.6 6 H19.4 M13.8 8 H19.2 M13.6 10 H19" stroke="#8ab0e0" stroke-width="0.8"/>
<path d="M5.4 13.2 H18.6" stroke="#40a0a0" stroke-width="0.9"/>
<path d="M5 15.4 H10.6 M4.8 17.4 H10.4 M4.6 19.4 H10.2" stroke="#c8c8c8" stroke-width="0.8"/>
<rect x="12" y="15.2" width="6.6" height="5" fill="#58a8d8"/><path d="M12 20.2 L15 17.6 L18.6 20.2Z" fill="#3c8c50"/>
</g>
<g transform="translate(152,46)">
<rect x="0" y="0" width="25" height="25" fill="#fff"/>
<path d="M2.6 0.8 L7.6 2.2 V23.6 L2.6 20.4 Z" fill="#7c9ccc"/>
<path d="M7 4.6 L19.6 3 L20.4 19.6 L7.6 23.4 Z" fill="#a8c0e4"/>
<path d="M9 5.4 L18.4 5 L19.2 17.6 L10 19.8 Z" fill="#f4f6fa" stroke="#9ab0d0" stroke-width="0.5"/>
<path d="M12 8 L19.8 7.4 L21 19.6 L13.2 21.8 Z" fill="#fdfdfd" stroke="#9ab0d0" stroke-width="0.5"/>
<path d="M14.6 14 L16.8 9.4 L17.2 14 M15.2 12.6H17.4" stroke="#2848c0" stroke-width="1" fill="none"/>
<path d="M14.4 16.2 H19.4 M14.6 18 H19.6" stroke="#7ca0d8" stroke-width="0.8"/>
<path d="M7.6 23.6 L9.2 12.6 L13 13.4 L12.4 22 Z" fill="#5c84c4"/>
<path d="M18.4 19.8 L20.6 11 L22.6 11.6 L21.6 19.4 Z" fill="#5c84c4"/>
</g>
<rect x="180.9" y="47" width="0.9" height="24" fill="#d2d2d2"/>
<g>
<rect x="185.4" y="47.8" width="25.6" height="5.5" rx="0.6" fill="#3a78b4"/>
<rect x="185.4" y="55" width="25.6" height="16.7" rx="0.6" fill="#3a78b4"/>
<g fill="#fbfbfb"><rect x="188" y="57.4" width="5.6" height="2.7"/><rect x="195.2" y="57.4" width="5.6" height="2.7"/><rect x="202.6" y="57.4" width="5.6" height="2.7"/>
<rect x="188" y="62" width="5.6" height="2.7"/><rect x="195.2" y="62" width="5.6" height="2.7"/><rect x="202.6" y="62" width="5.6" height="2.7"/>
<rect x="188" y="66.6" width="5.6" height="2.7"/><rect x="195.2" y="66.6" width="5.6" height="2.7"/><rect x="202.6" y="66.6" width="5.6" height="2.7"/></g>
<path d="M189.4 47.6 H193.6 V49.6 A2.1 2.1 0 0 1 189.4 49.6 Z" fill="#f8f8f8"/>
<path d="M203.2 47.6 H207.4 V49.6 A2.1 2.1 0 0 1 203.2 49.6 Z" fill="#f8f8f8"/>
<rect x="190.8" y="46" width="1.4" height="3.8" rx="0.6" fill="#3a78b4"/><rect x="204.6" y="46" width="1.4" height="3.8" rx="0.6" fill="#3a78b4"/>
</g>
<rect x="215.2" y="47" width="0.9" height="24" fill="#d2d2d2"/>
<g transform="translate(219.6,46)">
<path d="M0.4 3.6 L3 0.4 H9.6 L7 3.6 Z" fill="#e8eef6" stroke="#777" stroke-width="0.4"/>
<rect x="0.4" y="3.6" width="6.8" height="21.6" fill="#3d7fc4"/>
<rect x="1.4" y="6.4" width="4.6" height="1.2" fill="#e8eef8"/>
<rect x="1.4" y="8.6" width="4.6" height="1.5" fill="#28c028"/>
<rect x="1.4" y="10.8" width="4.6" height="3.8" fill="#f4f6fa"/>
<rect x="1.4" y="15.4" width="4.6" height="1.1" fill="#c8d8f0"/>
<circle cx="3.8" cy="19.4" r="1.3" fill="#222"/><circle cx="3.8" cy="19.4" r="0.5" fill="#aaa"/>
</g>
<g transform="translate(226.6,46)">
<path d="M0.4 3.6 L3 0.4 H9.6 L7 3.6 Z" fill="#e8eef6" stroke="#777" stroke-width="0.4"/>
<rect x="0.4" y="3.6" width="6.8" height="21.6" fill="#3d7fc4"/>
<rect x="1.4" y="6.4" width="4.6" height="1.2" fill="#e8eef8"/>
<rect x="1.4" y="8.6" width="4.6" height="1.5" fill="#28c028"/>
<rect x="1.4" y="10.8" width="4.6" height="3.8" fill="#f4f6fa"/>
<rect x="1.4" y="15.4" width="4.6" height="1.1" fill="#c8d8f0"/>
<circle cx="3.8" cy="19.4" r="1.3" fill="#222"/><circle cx="3.8" cy="19.4" r="0.5" fill="#aaa"/>
</g>
<g transform="translate(233.6,46)">
<path d="M0.4 3.6 L3 0.4 H9.6 L7 3.6 Z" fill="#e8eef6" stroke="#777" stroke-width="0.4"/>
<rect x="0.4" y="3.6" width="6.8" height="21.6" fill="#3d7fc4"/>
<rect x="1.4" y="6.4" width="4.6" height="1.2" fill="#e8eef8"/>
<rect x="1.4" y="8.6" width="4.6" height="1.5" fill="#28c028"/>
<rect x="1.4" y="10.8" width="4.6" height="3.8" fill="#f4f6fa"/>
<rect x="1.4" y="15.4" width="4.6" height="1.1" fill="#c8d8f0"/>
<circle cx="3.8" cy="19.4" r="1.3" fill="#222"/><circle cx="3.8" cy="19.4" r="0.5" fill="#aaa"/>
</g>
<path d="M240.8 49.6 L244.6 46.6 V68.4 L240.8 71.2 Z" fill="#2c64a4"/>
<g fill="#2f6db2">
<path d="M254.8 47.6 C258.4 47.6 259.4 51.6 259 55.4 C258.8 58.4 258.2 60.6 258 61.6 L253.2 61.2 C252.6 58 251 54.4 251.4 51.6 C251.8 49 253 47.6 254.8 47.6 Z"/>
<path d="M253.2 62.8 L258 63.2 C258 65.6 257.2 67.4 255.6 67.4 C254 67.4 253.2 65.4 253.2 62.8 Z"/>
<path d="M265.4 49.8 C261.8 49.8 260.8 53.8 261.2 57.6 C261.4 60.6 262 62.8 262.2 63.8 L267 63.4 C267.6 60.2 269.2 56.6 268.8 53.8 C268.4 51.2 267.2 49.8 265.4 49.8 Z"/>
<path d="M267 65 L262.2 65.4 C262.2 67.8 263 69.6 264.6 69.6 C266.2 69.6 267 67.6 267 65 Z"/>
</g>
<g>
<path d="M277.4 65.4 L296.8 47.4 L300.6 52 L281.2 70.2 Z" fill="#fdfdfd" stroke="#2f6db2" stroke-width="1.7" stroke-linejoin="round"/>
<g stroke="#2f6db2" stroke-width="1.3"><path d="M283.2 66.6 L281.8 65 M286.2 63.8 L284.8 62.2 M289.2 61 L287.8 59.4 M292.2 58.2 L290.8 56.6 M295.2 55.4 L293.8 53.8 M298.2 52.6 L296.8 51"/></g>
</g>
<g>
<rect x="307" y="49.6" width="21.8" height="20.8" rx="1.4" fill="#2b609a"/>
<rect x="316.8" y="55" width="2.2" height="15.6" fill="#f8f8f8"/>
<circle cx="317.9" cy="52" r="6.6" fill="#f8f8f8"/>
<circle cx="317.9" cy="52" r="4.7" fill="#fff" stroke="#2b609a" stroke-width="1.5"/>
<circle cx="317.9" cy="52" r="1.1" fill="#2b609a"/>
<path d="M317.9 52 L319.2 50.2" stroke="#2b609a" stroke-width="0.6"/>
</g>
<text x="346" y="54.4" font-family="Liberation Sans, sans-serif" font-size="8.2" font-weight="bold" fill="#f01818" text-anchor="middle" textLength="16.4" lengthAdjust="spacingAndGlyphs">BMI</text>
<g>
<path d="M334 68 A12 12 0 0 1 358 68 H351.4 A5.4 5.4 0 0 0 340.6 68 Z" fill="#3d9ad8"/>
<path d="M334 68 A12 12 0 0 1 338 59.2 L342.2 64.2 A5.4 5.4 0 0 0 340.6 68 Z" fill="#1f64a0"/>
<path d="M338 59.2 A12 12 0 0 1 346 56 V62.6 A5.4 5.4 0 0 0 342.2 64.2 Z" fill="#2f86c8"/>
<path d="M354 59.2 A12 12 0 0 1 358 68 H351.4 A5.4 5.4 0 0 0 349.8 64.2 Z" fill="#8cc4ea"/>
<path d="M343.4 67.6 L350.6 62.4 L346.2 69 Z" fill="#d02020"/><circle cx="345" cy="67.6" r="1.7" fill="#d02020"/>
</g>
<g transform="translate(362.5,45.8) scale(1)">
<ellipse cx="9" cy="6.6" rx="8" ry="5" fill="#f2f2f2" stroke="#999" stroke-width="0.7"/>
<path d="M2 8.4 Q9 13.4 16 8.4" stroke="#aaa" stroke-width="0.7" fill="none"/>
<path d="M3.4 8 L14.6 4.4" stroke="#888" stroke-width="0.7"/>
<rect x="5" y="15.4" width="19.6" height="8.6" rx="4.3" fill="#e4e4e4" stroke="#aaa" stroke-width="0.5"/>
<path d="M14.4 15.4 H20.3 A4.3 4.3 0 0 1 20.3 24 H14.4 Z" fill="#2f8fdc"/>
<path d="M15 16.6 H20 A3 2 0 0 1 22.6 18" stroke="#9cd0f8" stroke-width="1" fill="none"/>
<path d="M1.4 24.4 L5.4 20.4" stroke="#222" stroke-width="0.7"/>
<path d="M5 20.8 L17.4 8.6" stroke="#1c2c6c" stroke-width="2.6"/>
<path d="M6.4 19.4 L10.4 15.4" stroke="#d02020" stroke-width="1.6"/>
<path d="M11.4 14.6 L16.8 9.2" stroke="#dfe6f0" stroke-width="1.2"/>
<path d="M15.6 6.8 L19.2 10.4 M17.4 8.6 L22 4 M20.4 2.4 L23.6 5.6" stroke="#222" stroke-width="1.2"/>
</g>
<g>
<rect x="390.6" y="46.4" width="25.8" height="25" fill="#fff"/>
<g fill="#e6e9ee" stroke="#4a7fd4" stroke-width="1.1" stroke-linejoin="round">
<path d="M404 62.6 V53.6 C402.6 51.4 404 48.8 408 48.8 C413.6 48.6 416.6 50.6 415.2 53.6 V62 Z"/>
<path d="M399.6 64.6 V54.8 C398.2 52.6 399.6 50 403.6 50 C409.2 49.8 412.2 51.8 410.8 54.8 V64.4 Z"/>
<path d="M393.6 69.4 V58.4 C391.2 56 392 52.4 396.4 52 C402 51.4 407.8 52.4 406 57.6 V69.4 Z"/>
</g></g>
<rect x="419.90000000000003" y="47" width="0.9" height="24" fill="#d2d2d2"/>
<g stroke="#3f70d4" fill="none" stroke-linecap="round">
<path d="M427.8 48.8 L437 58.4" stroke-width="1.3"/>
<path d="M437.4 58.8 L446.8 68.6" stroke-width="3.4"/>
<path d="M427.6 68.2 L442 53.6" stroke-width="3.2"/>
</g>
<circle cx="444.2" cy="52" r="4.7" fill="#3f70d4"/>
<path d="M444.6 51.4 L450.4 45.8" stroke="#f7f7f7" stroke-width="3"/>
<circle cx="428" cy="67.8" r="0.8" fill="#f5f5f5"/>
<rect x="453.40000000000003" y="47" width="0.9" height="24" fill="#d2d2d2"/>
<g transform="translate(457.4,46) scale(1)">
<path d="M9 0.6 H21.6 V19.4 H9 Z" fill="#fafafa" stroke="#1a1a1a" stroke-width="1.1"/>
<path d="M2.4 24.6 L7.6 19.4 H22.2 L16.8 24.6 Z" fill="#6464f4"/><path d="M15 24.6 L22.2 19.4 V20.6 L17 24.6Z" fill="#1010d8"/><path d="M3.4 25 H13" stroke="#555" stroke-width="0.5"/>
<path d="M15 5.4 L21.9 0.5 V19.6 L15 24.6 Z" fill="#a4a4a4" stroke="#111" stroke-width="1"/>
<path d="M16.2 6.6 L20.6 3.4 V18.8 L16.2 22 Z" fill="#c8c8c8"/>
<path d="M19.6 3 L21.2 1.8 V19.2 L19.6 20.4Z" fill="#7c7c7c"/>
<circle cx="18.2" cy="13" r="1.1" fill="#555" stroke="#111" stroke-width="0.4"/>
<path d="M0.8 7.4 H6.8 V3.8 L13.4 9.6 L6.8 15.6 V11.8 H0.8 Z" fill="#ececec" stroke="#111" stroke-width="1" stroke-linejoin="round"/>
<path d="M7.4 11.4 L12.4 9.6 L7.4 14.6Z" fill="#b4b4b4"/>
<path d="M7.2 4.2 L13 9.2" stroke="#207878" stroke-width="0.9"/>
</g>
<rect x="487.0" y="47" width="0.9" height="24" fill="#d2d2d2"/>
<defs><linearGradient id="hg" x1="0" y1="0" x2="0" y2="1"><stop offset="0" stop-color="#f04848"/><stop offset="0.55" stop-color="#d81818"/><stop offset="1" stop-color="#8c0c0c"/></linearGradient>
<linearGradient id="kg" x1="0" y1="0" x2="1" y2="0"><stop offset="0" stop-color="#a01010"/><stop offset="0.6" stop-color="#e03820"/><stop offset="1" stop-color="#c02010"/></linearGradient></defs>
<path d="M16.8 94.8 C13 91.6 7 87.6 7 82.6 C7 79.2 9.4 77.2 12 77.2 C14.2 77.2 15.8 78.4 16.8 80.2 C17.8 78.4 19.4 77.2 21.6 77.2 C24.2 77.2 26.6 79.2 26.6 82.6 C26.6 87.6 20.6 91.6 16.8 94.8 Z" fill="url(#hg)"/>
<path d="M9.4 81.6 C9.8 79.6 11.6 78.6 13.4 79.2" stroke="#ff9a9a" stroke-width="1.1" fill="none" stroke-linecap="round"/>
<g>
<rect x="129" y="79.6" width="17.6" height="16.6" rx="1" fill="#2b609a"/>
<rect x="136.9" y="84" width="1.9" height="12.4" fill="#fbfbfb"/>
<circle cx="137.8" cy="82.4" r="5.3" fill="#fbfbfb"/>
<circle cx="137.8" cy="82.4" r="3.7" fill="#fff" stroke="#2b609a" stroke-width="1.2"/>
<circle cx="137.8" cy="82.4" r="0.9" fill="#2b609a"/>
</g>
<g><path d="M208.6 79.4 C209.41 82.34 211.29999999999998 83.60000000000001 211.29999999999998 85.44800000000001 A2.7 2.3520000000000003 0 0 1 205.9 85.44800000000001 C205.9 83.60000000000001 207.79 82.34 208.6 79.4 Z" fill="#e01414"/><path d="M218.8 88.8 C219.58 91.53 221.4 92.7 221.4 94.416 A2.6 2.184 0 0 1 216.20000000000002 94.416 C216.20000000000002 92.7 218.02 91.53 218.8 88.8 Z" fill="#e01414"/><path d="M206 96.4 L209.8 92.4" stroke="#333" stroke-width="0.7"/>
<path d="M209.4 93 L218.2 83.6" stroke="#1a1a1a" stroke-width="2.8"/>
<path d="M210.4 92 L213.4 88.8" stroke="#e82020" stroke-width="1.5"/>
<path d="M214 88 L217.6 84.2" stroke="#ececec" stroke-width="1.2"/>
<path d="M215.4 80.8 L220.8 86.2" stroke="#222" stroke-width="1.1"/>
<path d="M218.2 83.4 L221.6 80" stroke="#555" stroke-width="1.1"/>
<path d="M219.8 78.6 L223.6 82" stroke="#777" stroke-width="1.3"/></g>
<g>
<path d="M316 79.4 C311 78.6 307.4 82.6 307.6 87.8 C307.8 92.8 310.8 96.8 314.4 96.4 C317.4 96 318 93.2 316.4 91 C315 89 315 86.6 316.6 85 C318.6 83 319 80 316 79.4 Z" fill="url(#kg)"/>
<path d="M316 86.6 C319 86 321.4 86.8 323.2 88.2" stroke="#e02020" stroke-width="1.2" fill="none"/>
<path d="M316 88 C319 87.4 321.2 88.2 322.8 89.4" stroke="#3030d0" stroke-width="1.2" fill="none"/>
<path d="M310 84 C310.4 82 312 81 313.6 81" stroke="#f08060" stroke-width="0.9" fill="none"/>
</g>
<path d="M418.7 82.6 C420.17 87.36 423.59999999999997 89.39999999999999 423.59999999999997 92.392 A4.9 3.8080000000000003 0 0 1 413.8 92.392 C413.8 89.39999999999999 417.22999999999996 87.36 418.7 82.6 Z" fill="#e01010"/><circle cx="418.7" cy="80.4" r="1" fill="#f01818"/>
<path d="M416.4 89 C415.6 91 416 92.6 417 93.4" stroke="#ff5a4a" stroke-width="0.9" fill="none"/>
<g><path d="M498.2 82.6 C499.685 87.36 503.15 89.39999999999999 503.15 92.392 A4.95 3.8080000000000003 0 0 1 493.25 92.392 C493.25 89.39999999999999 496.715 87.36 498.2 82.6 Z" fill="#e01010"/><circle cx="498.1" cy="80.4" r="1" fill="#f01818"/>
<path d="M496.2 91.8 L501.6 86.4" stroke="#3a3a3a" stroke-width="0.8"/>
<path d="M501.4 86.8 L506.4 81.6" stroke="#1c2460" stroke-width="3.2"/>
<path d="M502.2 85.8 L504 84" stroke="#e81818" stroke-width="2"/>
<path d="M504.4 83.8 L506 82.2" stroke="#f2f2f8" stroke-width="1.6"/>
<path d="M505 80 L508 83 M506.4 81.4 L507.8 78.6 L506 79.8" stroke="#333" stroke-width="0.9" fill="none"/></g>
<g transform="translate(603.2,78) scale(0.75)">
<ellipse cx="9" cy="6.6" rx="8" ry="5" fill="#f2f2f2" stroke="#999" stroke-width="0.7"/>
<path d="M2 8.4 Q9 13.4 16 8.4" stroke="#aaa" stroke-width="0.7" fill="none"/>
<path d="M3.4 8 L14.6 4.4" stroke="#888" stroke-width="0.7"/>
<rect x="5" y="15.4" width="19.6" height="8.6" rx="4.3" fill="#e4e4e4" stroke="#aaa" stroke-width="0.5"/>
<path d="M14.4 15.4 H20.3 A4.3 4.3 0 0 1 20.3 24 H14.4 Z" fill="#2f8fdc"/>
<path d="M15 16.6 H20 A3 2 0 0 1 22.6 18" stroke="#9cd0f8" stroke-width="1" fill="none"/>
<path d="M1.4 24.4 L5.4 20.4" stroke="#222" stroke-width="0.7"/>
<path d="M5 20.8 L17.4 8.6" stroke="#1c2c6c" stroke-width="2.6"/>
<path d="M6.4 19.4 L10.4 15.4" stroke="#d02020" stroke-width="1.6"/>
<path d="M11.4 14.6 L16.8 9.2" stroke="#dfe6f0" stroke-width="1.2"/>
<path d="M15.6 6.8 L19.2 10.4 M17.4 8.6 L22 4 M20.4 2.4 L23.6 5.6" stroke="#222" stroke-width="1.2"/>
</g>
<g transform="translate(708.4,78.6)">
<rect x="4.4" y="0.4" width="9.6" height="6.6" fill="#f0f0f0" stroke="#555" stroke-width="0.6"/>
<g stroke="#666" stroke-width="0.7"><path d="M5.6 2H13M5.6 3.6H13M5.6 5.2H13"/></g>
<rect x="11.6" y="1.8" width="6.4" height="9" fill="#f8f8f8" stroke="#777" stroke-width="0.5"/>
<path d="M12.6 4H17M12.6 5.6H17M12.6 7.2H17" stroke="#7aa0d8" stroke-width="0.6"/>
<rect x="0.6" y="6.6" width="17.4" height="7" rx="1.2" fill="#66748a"/>
<rect x="3" y="8.6" width="12.4" height="3" fill="#7aa4e6"/>
<rect x="3" y="8.6" width="12.4" height="1" fill="#c4d8f6"/>
<rect x="1.4" y="13.4" width="16" height="1.2" fill="#2a2a2a"/>
<rect x="2.4" y="14.6" width="14" height="1.4" fill="#c8c8c8"/>
</g>
<defs><filter id="pb" x="-10%" y="-10%" width="120%" height="120%"><feGaussianBlur stdDeviation="0.45"/></filter>
<clipPath id="pc"><rect x="868.2" y="29" width="33.8" height="47.8"/></clipPath></defs>
<rect x="868.2" y="29" width="33.8" height="47.8" fill="#fff"/>
<g clip-path="url(#pc)"><g filter="url(#pb)" transform="translate(860,24) scale(0.08375)">
<!-- shirt -->
<path d="M105 640 L108 480 C130 450 190 430 240 410 L300 470 L400 440 C450 455 490 480 498 520 L498 640 Z" fill="#bccdd6"/>
<path d="M108 480 C130 450 190 430 240 410 L250 470 L180 600 L108 620Z" fill="#b0c6ce"/>
<path d="M150 520 L160 600 M200 560 L230 600" stroke="#8a9ea8" stroke-width="10"/>
<!-- white T -->
<path d="M270 480 L400 470 L420 520 L345 600 L300 560 Z" fill="#f8f8f8"/>
<!-- lanyard -->
<path d="M250 470 L300 600" stroke="#6a7ab8" stroke-width="22"/>
<path d="M270 510 L305 600" stroke="#d8c050" stroke-width="9"/>
<path d="M430 560 L400 620" stroke="#c06080" stroke-width="18"/>
<path d="M400 480 L445 560" stroke="#8aa0c0" stroke-width="20"/>
<!-- neck -->
<path d="M240 360 L240 440 L300 490 L390 460 L400 400 Z" fill="#c49474"/>
<!-- face -->
<ellipse cx="325" cy="285" rx="112" ry="118" fill="#d9a98a"/>
<ellipse cx="372" cy="250" rx="50" ry="40" fill="#e2b496"/>
<path d="M205 250 C200 300 215 340 245 365 L260 300 Z" fill="#c08c70"/>
<!-- beard -->
<path d="M240 320 C250 380 300 420 360 410 C410 400 430 350 430 320 C400 350 330 360 300 330 Z" fill="#8c6c5a"/>
<path d="M310 300 C340 340 400 335 420 290 C390 305 340 305 310 300Z" fill="#f4ece6"/>
<path d="M300 290 C340 305 400 300 425 280" stroke="#7a5040" stroke-width="9" fill="none"/>
<!-- eyes -->
<path d="M300 215 L345 210 M385 208 L420 212" stroke="#5a4034" stroke-width="10"/>
<!-- ear / hair -->
<path d="M200 230 C185 260 195 310 225 340 L235 250Z" fill="#a08470"/>
<!-- cap -->
<path d="M188 235 C170 160 200 100 290 85 C370 75 430 110 440 160 C440 175 425 178 410 168 C360 130 290 150 245 200 C225 215 205 235 188 235 Z" fill="#8c9c8e"/>
<path d="M245 200 C290 150 360 130 410 168 C425 178 440 175 440 160 C445 175 435 195 420 190 C370 160 300 170 245 200Z" fill="#66766a"/>
<path d="M200 150 C230 105 290 95 330 95" stroke="#a4b2a6" stroke-width="14" fill="none"/>
</g></g>
<path d="M125.0 111.35000000000001 L128.4 114.75 L131.8 111.35000000000001" stroke="#555" stroke-width="0.9" fill="none"/>
<path d="M125.0 130.5 L128.4 133.9 L131.8 130.5" stroke="#555" stroke-width="0.9" fill="none"/>
<path d="M125.0 149.6 L128.4 153.0 L131.8 149.6" stroke="#555" stroke-width="0.9" fill="none"/>
<rect x="430.3" y="107" width="8.2" height="8.6" rx="1.4" fill="#d9dde6" stroke="#6c6c6c" stroke-width="0.9"/><path d="M438.4 112.6 L435.6 115.8 H438 Z" fill="#8a8a8a"/><path d="M431.4 108.2 H437.2" stroke="#f0f2f6" stroke-width="0.8"/>
<path d="M440 110 H446 L443 113.2 Z" fill="#34466a"/>
<path d="M370.0 206.7 L373.4 210.1 L376.79999999999995 206.7" stroke="#555" stroke-width="0.9" fill="none"/>
<circle cx="830.5" cy="129.6" r="5.5" fill="#0f5cc4"/><circle cx="830.5" cy="129.6" r="2.1" fill="#fff"/>
<circle cx="830.5" cy="148.8" r="5.1" fill="#f7f7f7" stroke="#6a6a6a" stroke-width="0.9"/>
<circle cx="830.5" cy="167.8" r="5.1" fill="#f7f7f7" stroke="#6a6a6a" stroke-width="0.9"/>
<rect x="687.4" y="182.6" width="9.8" height="9.8" rx="2" fill="#fafafa" stroke="#666" stroke-width="0.8"/>
<path d="M20.8 279.6 V286.4 H13 Z" fill="#dde5f3"/>
<rect x="641.9" y="374.49" width="211.50" height="26.89" fill="#effdec" stroke="#d4d8d4" stroke-width="0.7"/>
<rect x="641.9" y="419.31" width="211.50" height="17.93" fill="#effdec" stroke="#d4d8d4" stroke-width="0.7"/>
<path d="M641.9 482.07 H853.40" stroke="#c2c2c2" stroke-width="0.75" stroke-dasharray="1.8 1.5"/>
<path d="M641.9 464.14 H853.40" stroke="#c2c2c2" stroke-width="0.75" stroke-dasharray="1.8 1.5"/>
<path d="M641.9 446.21 H853.40" stroke="#c2c2c2" stroke-width="0.75" stroke-dasharray="1.8 1.5"/>
<path d="M641.9 428.28 H853.40" stroke="#c2c2c2" stroke-width="0.75" stroke-dasharray="1.8 1.5"/>
<path d="M641.9 410.35 H853.40" stroke="#c2c2c2" stroke-width="0.75" stroke-dasharray="1.8 1.5"/>
<path d="M641.9 392.42 H853.40" stroke="#c2c2c2" stroke-width="0.75" stroke-dasharray="1.8 1.5"/>
<path d="M641.9 374.49 H853.40" stroke="#c2c2c2" stroke-width="0.75" stroke-dasharray="1.8 1.5"/>
<path d="M641.9 356.56 H853.40" stroke="#c2c2c2" stroke-width="0.75" stroke-dasharray="1.8 1.5"/>
<path d="M641.9 338.63 H853.40" stroke="#c2c2c2" stroke-width="0.75" stroke-dasharray="1.8 1.5"/>
<path d="M641.9 338.03 V500.7 " stroke="#3a3a3a" stroke-width="1.5"/>
<path d="M641.1999999999999 500.0 H854.10" stroke="#3a3a3a" stroke-width="1.5"/>
<path d="M636.5 500.00 H641.9" stroke="#3a3a3a" stroke-width="1.1"/>
<path d="M638.9 491.04 H641.9" stroke="#3a3a3a" stroke-width="1.1"/>
<path d="M636.5 482.07 H641.9" stroke="#3a3a3a" stroke-width="1.1"/>
<path d="M638.9 473.11 H641.9" stroke="#3a3a3a" stroke-width="1.1"/>
<path d="M636.5 464.14 H641.9" stroke="#3a3a3a" stroke-width="1.1"/>
<path d="M638.9 455.18 H641.9" stroke="#3a3a3a" stroke-width="1.1"/>
<path d="M636.5 446.21 H641.9" stroke="#3a3a3a" stroke-width="1.1"/>
<path d="M638.9 437.25 H641.9" stroke="#3a3a3a" stroke-width="1.1"/>
<path d="M636.5 428.28 H641.9" stroke="#3a3a3a" stroke-width="1.1"/>
<path d="M638.9 419.31 H641.9" stroke="#3a3a3a" stroke-width="1.1"/>
<path d="M636.5 410.35 H641.9" stroke="#3a3a3a" stroke-width="1.1"/>
<path d="M638.9 401.38 H641.9" stroke="#3a3a3a" stroke-width="1.1"/>
<path d="M636.5 392.42 H641.9" stroke="#3a3a3a" stroke-width="1.1"/>
<path d="M638.9 383.45 H641.9" stroke="#3a3a3a" stroke-width="1.1"/>
<path d="M636.5 374.49 H641.9" stroke="#3a3a3a" stroke-width="1.1"/>
<path d="M638.9 365.52 H641.9" stroke="#3a3a3a" stroke-width="1.1"/>
<path d="M636.5 356.56 H641.9" stroke="#3a3a3a" stroke-width="1.1"/>
<path d="M638.9 347.60 H641.9" stroke="#3a3a3a" stroke-width="1.1"/>
<path d="M636.5 338.63 H641.9" stroke="#3a3a3a" stroke-width="1.1"/>
<path d="M641.90 500.0 V504.6" stroke="#3a3a3a" stroke-width="1.1"/>
<path d="M653.65 500.0 V503.0" stroke="#3a3a3a" stroke-width="1.1"/>
<path d="M665.40 500.0 V504.6" stroke="#3a3a3a" stroke-width="1.1"/>
<path d="M677.15 500.0 V503.0" stroke="#3a3a3a" stroke-width="1.1"/>
<path d="M688.90 500.0 V504.6" stroke="#3a3a3a" stroke-width="1.1"/>
<path d="M700.65 500.0 V503.0" stroke="#3a3a3a" stroke-width="1.1"/>
<path d="M712.40 500.0 V504.6" stroke="#3a3a3a" stroke-width="1.1"/>
<path d="M724.15 500.0 V503.0" stroke="#3a3a3a" stroke-width="1.1"/>
<path d="M735.90 500.0 V504.6" stroke="#3a3a3a" stroke-width="1.1"/>
<path d="M747.65 500.0 V503.0" stroke="#3a3a3a" stroke-width="1.1"/>
<path d="M759.40 500.0 V504.6" stroke="#3a3a3a" stroke-width="1.1"/>
<path d="M771.15 500.0 V503.0" stroke="#3a3a3a" stroke-width="1.1"/>
<path d="M782.90 500.0 V504.6" stroke="#3a3a3a" stroke-width="1.1"/>
<path d="M794.65 500.0 V503.0" stroke="#3a3a3a" stroke-width="1.1"/>
<path d="M806.40 500.0 V504.6" stroke="#3a3a3a" stroke-width="1.1"/>
<path d="M818.15 500.0 V503.0" stroke="#3a3a3a" stroke-width="1.1"/>
<path d="M829.90 500.0 V504.6" stroke="#3a3a3a" stroke-width="1.1"/>
<path d="M841.65 500.0 V503.0" stroke="#3a3a3a" stroke-width="1.1"/>
<path d="M853.40 500.0 V504.6" stroke="#3a3a3a" stroke-width="1.1"/>
<text x="628.00" y="502.70" font-family="Liberation Sans, sans-serif" font-size="9.2" fill="#686868" textLength="4.70" lengthAdjust="spacingAndGlyphs">0</text>
<text x="623.30" y="484.77" font-family="Liberation Sans, sans-serif" font-size="9.2" fill="#686868" textLength="9.40" lengthAdjust="spacingAndGlyphs">20</text>
<text x="623.30" y="466.84" font-family="Liberation Sans, sans-serif" font-size="9.2" fill="#686868" textLength="9.40" lengthAdjust="spacingAndGlyphs">40</text>
<text x="623.30" y="448.91" font-family="Liberation Sans, sans-serif" font-size="9.2" fill="#686868" textLength="9.40" lengthAdjust="spacingAndGlyphs">60</text>
<text x="623.30" y="430.98" font-family="Liberation Sans, sans-serif" font-size="9.2" fill="#686868" textLength="9.40" lengthAdjust="spacingAndGlyphs">80</text>
<text x="618.60" y="413.05" font-family="Liberation Sans, sans-serif" font-size="9.2" fill="#686868" textLength="14.10" lengthAdjust="spacingAndGlyphs">100</text>
<text x="618.60" y="395.12" font-family="Liberation Sans, sans-serif" font-size="9.2" fill="#686868" textLength="14.10" lengthAdjust="spacingAndGlyphs">120</text>
<text x="618.60" y="377.19" font-family="Liberation Sans, sans-serif" font-size="9.2" fill="#686868" textLength="14.10" lengthAdjust="spacingAndGlyphs">140</text>
<text x="618.60" y="359.26" font-family="Liberation Sans, sans-serif" font-size="9.2" fill="#686868" textLength="14.10" lengthAdjust="spacingAndGlyphs">160</text>
<text x="618.60" y="341.33" font-family="Liberation Sans, sans-serif" font-size="9.2" fill="#686868" textLength="14.10" lengthAdjust="spacingAndGlyphs">180</text>
<text transform="translate(640.00,510.2) rotate(45)" font-family="Liberation Sans, sans-serif" font-size="8.8" fill="#6a6a6a" stroke="#6a6a6a" stroke-width="0.12" textLength="39.4" lengthAdjust="spacingAndGlyphs">01.10.2025</text>
<text transform="translate(663.50,510.2) rotate(45)" font-family="Liberation Sans, sans-serif" font-size="8.8" fill="#6a6a6a" stroke="#6a6a6a" stroke-width="0.12" textLength="39.4" lengthAdjust="spacingAndGlyphs">04.10.2025</text>
<text transform="translate(687.00,510.2) rotate(45)" font-family="Liberation Sans, sans-serif" font-size="8.8" fill="#6a6a6a" stroke="#6a6a6a" stroke-width="0.12" textLength="39.4" lengthAdjust="spacingAndGlyphs">05.10.2025</text>
<text transform="translate(710.50,510.2) rotate(45)" font-family="Liberation Sans, sans-serif" font-size="8.8" fill="#6a6a6a" stroke="#6a6a6a" stroke-width="0.12" textLength="39.4" lengthAdjust="spacingAndGlyphs">06.10.2025</text>
<text transform="translate(734.00,510.2) rotate(45)" font-family="Liberation Sans, sans-serif" font-size="8.8" fill="#6a6a6a" stroke="#6a6a6a" stroke-width="0.12" textLength="39.4" lengthAdjust="spacingAndGlyphs">07.10.2025</text>
<text transform="translate(757.50,510.2) rotate(45)" font-family="Liberation Sans, sans-serif" font-size="8.8" fill="#6a6a6a" stroke="#6a6a6a" stroke-width="0.12" textLength="39.4" lengthAdjust="spacingAndGlyphs">08.10.2025</text>
<text transform="translate(781.00,510.2) rotate(45)" font-family="Liberation Sans, sans-serif" font-size="8.8" fill="#6a6a6a" stroke="#6a6a6a" stroke-width="0.12" textLength="39.4" lengthAdjust="spacingAndGlyphs">09.10.2025</text>
<text transform="translate(804.50,510.2) rotate(45)" font-family="Liberation Sans, sans-serif" font-size="8.8" fill="#6a6a6a" stroke="#6a6a6a" stroke-width="0.12" textLength="39.4" lengthAdjust="spacingAndGlyphs">10.10.2025</text>
<text transform="translate(828.00,510.2) rotate(45)" font-family="Liberation Sans, sans-serif" font-size="8.8" fill="#6a6a6a" stroke="#6a6a6a" stroke-width="0.12" textLength="39.4" lengthAdjust="spacingAndGlyphs">11.10.2025</text>
<text transform="translate(851.50,510.2) rotate(45)" font-family="Liberation Sans, sans-serif" font-size="8.8" fill="#6a6a6a" stroke="#6a6a6a" stroke-width="0.12" textLength="39.4" lengthAdjust="spacingAndGlyphs">12.10.2025</text>
<polyline fill="none" stroke="#8ccbe4" stroke-width="1.5" points="641.90,376.28 665.40,361.94 688.90,340.42 712.40,360.15 735.90,366.42 759.40,355.66 782.90,360.15 806.40,356.56 829.90,359.25 853.40,371.80"/>
<polyline fill="none" stroke="#86e886" stroke-width="1.5" points="641.90,430.07 665.40,416.63 688.90,411.25 712.40,421.11 735.90,420.21 759.40,421.11 782.90,422.00 806.40,419.31 829.90,423.80 853.40,420.21"/>
<circle cx="641.90" cy="376.28" r="2.9" fill="#c8e6f8" stroke="#1414f0" stroke-width="1.1"/><path d="M640.30 377.88 L643.50 374.68" stroke="#1414f0" stroke-width="0.7"/>
<text x="646.10" y="370.78" font-family="Liberation Sans, sans-serif" font-size="7.7" fill="#111" stroke="#111" stroke-width="0.1" textLength="12.0" lengthAdjust="spacingAndGlyphs">138</text>
<circle cx="665.40" cy="361.94" r="2.9" fill="#c8e6f8" stroke="#1414f0" stroke-width="1.1"/><path d="M663.80 363.54 L667.00 360.34" stroke="#1414f0" stroke-width="0.7"/>
<text x="669.60" y="356.44" font-family="Liberation Sans, sans-serif" font-size="7.7" fill="#111" stroke="#111" stroke-width="0.1" textLength="12.0" lengthAdjust="spacingAndGlyphs">154</text>
<circle cx="688.90" cy="340.42" r="2.9" fill="#c8e6f8" stroke="#1414f0" stroke-width="1.1"/><path d="M687.30 342.02 L690.50 338.82" stroke="#1414f0" stroke-width="0.7"/>
<text x="693.10" y="334.92" font-family="Liberation Sans, sans-serif" font-size="7.7" fill="#111" stroke="#111" stroke-width="0.1" textLength="12.0" lengthAdjust="spacingAndGlyphs">178</text>
<circle cx="712.40" cy="360.15" r="2.9" fill="#c8e6f8" stroke="#1414f0" stroke-width="1.1"/><path d="M710.80 361.75 L714.00 358.55" stroke="#1414f0" stroke-width="0.7"/>
<text x="716.60" y="354.65" font-family="Liberation Sans, sans-serif" font-size="7.7" fill="#111" stroke="#111" stroke-width="0.1" textLength="12.0" lengthAdjust="spacingAndGlyphs">156</text>
<circle cx="735.90" cy="366.42" r="2.9" fill="#c8e6f8" stroke="#1414f0" stroke-width="1.1"/><path d="M734.30 368.02 L737.50 364.82" stroke="#1414f0" stroke-width="0.7"/>
<text x="740.10" y="360.92" font-family="Liberation Sans, sans-serif" font-size="7.7" fill="#111" stroke="#111" stroke-width="0.1" textLength="12.0" lengthAdjust="spacingAndGlyphs">149</text>
<circle cx="759.40" cy="355.66" r="2.9" fill="#c8e6f8" stroke="#1414f0" stroke-width="1.1"/><path d="M757.80 357.26 L761.00 354.06" stroke="#1414f0" stroke-width="0.7"/>
<text x="763.60" y="350.16" font-family="Liberation Sans, sans-serif" font-size="7.7" fill="#111" stroke="#111" stroke-width="0.1" textLength="12.0" lengthAdjust="spacingAndGlyphs">161</text>
<circle cx="782.90" cy="360.15" r="2.9" fill="#c8e6f8" stroke="#1414f0" stroke-width="1.1"/><path d="M781.30 361.75 L784.50 358.55" stroke="#1414f0" stroke-width="0.7"/>
<text x="787.10" y="354.65" font-family="Liberation Sans, sans-serif" font-size="7.7" fill="#111" stroke="#111" stroke-width="0.1" textLength="12.0" lengthAdjust="spacingAndGlyphs">156</text>
<circle cx="806.40" cy="356.56" r="2.9" fill="#c8e6f8" stroke="#1414f0" stroke-width="1.1"/><path d="M804.80 358.16 L808.00 354.96" stroke="#1414f0" stroke-width="0.7"/>
<text x="810.60" y="351.06" font-family="Liberation Sans, sans-serif" font-size="7.7" fill="#111" stroke="#111" stroke-width="0.1" textLength="12.0" lengthAdjust="spacingAndGlyphs">160</text>
<circle cx="829.90" cy="359.25" r="2.9" fill="#c8e6f8" stroke="#1414f0" stroke-width="1.1"/><path d="M828.30 360.85 L831.50 357.65" stroke="#1414f0" stroke-width="0.7"/>
<text x="834.10" y="353.75" font-family="Liberation Sans, sans-serif" font-size="7.7" fill="#111" stroke="#111" stroke-width="0.1" textLength="12.0" lengthAdjust="spacingAndGlyphs">157</text>
<circle cx="853.40" cy="371.80" r="2.9" fill="#c8e6f8" stroke="#1414f0" stroke-width="1.1"/><path d="M851.80 373.40 L855.00 370.20" stroke="#1414f0" stroke-width="0.7"/>
<text x="857.60" y="366.30" font-family="Liberation Sans, sans-serif" font-size="7.7" fill="#111" stroke="#111" stroke-width="0.1" textLength="12.0" lengthAdjust="spacingAndGlyphs">143</text>
<path d="M641.90 426.87 L645.10 430.07 L641.90 433.27 L638.70 430.07 Z" fill="#c8f4c0" stroke="#2a9a2a" stroke-width="1"/><path d="M640.40 431.57 L643.40 428.57" stroke="#2a9a2a" stroke-width="0.7"/>
<text x="646.10" y="424.57" font-family="Liberation Sans, sans-serif" font-size="7.7" fill="#111" stroke="#111" stroke-width="0.1" textLength="8.0" lengthAdjust="spacingAndGlyphs">78</text>
<path d="M665.40 413.43 L668.60 416.63 L665.40 419.83 L662.20 416.63 Z" fill="#c8f4c0" stroke="#2a9a2a" stroke-width="1"/><path d="M663.90 418.13 L666.90 415.13" stroke="#2a9a2a" stroke-width="0.7"/>
<text x="669.60" y="411.13" font-family="Liberation Sans, sans-serif" font-size="7.7" fill="#111" stroke="#111" stroke-width="0.1" textLength="8.0" lengthAdjust="spacingAndGlyphs">93</text>
<path d="M688.90 408.05 L692.10 411.25 L688.90 414.45 L685.70 411.25 Z" fill="#c8f4c0" stroke="#2a9a2a" stroke-width="1"/><path d="M687.40 412.75 L690.40 409.75" stroke="#2a9a2a" stroke-width="0.7"/>
<text x="693.10" y="405.75" font-family="Liberation Sans, sans-serif" font-size="7.7" fill="#111" stroke="#111" stroke-width="0.1" textLength="8.0" lengthAdjust="spacingAndGlyphs">99</text>
<path d="M712.40 417.91 L715.60 421.11 L712.40 424.31 L709.20 421.11 Z" fill="#c8f4c0" stroke="#2a9a2a" stroke-width="1"/><path d="M710.90 422.61 L713.90 419.61" stroke="#2a9a2a" stroke-width="0.7"/>
<text x="716.60" y="415.61" font-family="Liberation Sans, sans-serif" font-size="7.7" fill="#111" stroke="#111" stroke-width="0.1" textLength="8.0" lengthAdjust="spacingAndGlyphs">88</text>
<path d="M735.90 417.01 L739.10 420.21 L735.90 423.41 L732.70 420.21 Z" fill="#c8f4c0" stroke="#2a9a2a" stroke-width="1"/><path d="M734.40 421.71 L737.40 418.71" stroke="#2a9a2a" stroke-width="0.7"/>
<text x="740.10" y="414.71" font-family="Liberation Sans, sans-serif" font-size="7.7" fill="#111" stroke="#111" stroke-width="0.1" textLength="8.0" lengthAdjust="spacingAndGlyphs">89</text>
<path d="M759.40 417.91 L762.60 421.11 L759.40 424.31 L756.20 421.11 Z" fill="#c8f4c0" stroke="#2a9a2a" stroke-width="1"/><path d="M757.90 422.61 L760.90 419.61" stroke="#2a9a2a" stroke-width="0.7"/>
<text x="763.60" y="415.61" font-family="Liberation Sans, sans-serif" font-size="7.7" fill="#111" stroke="#111" stroke-width="0.1" textLength="8.0" lengthAdjust="spacingAndGlyphs">88</text>
<path d="M782.90 418.80 L786.10 422.00 L782.90 425.20 L779.70 422.00 Z" fill="#c8f4c0" stroke="#2a9a2a" stroke-width="1"/><path d="M781.40 423.50 L784.40 420.50" stroke="#2a9a2a" stroke-width="0.7"/>
<text x="787.10" y="416.50" font-family="Liberation Sans, sans-serif" font-size="7.7" fill="#111" stroke="#111" stroke-width="0.1" textLength="8.0" lengthAdjust="spacingAndGlyphs">87</text>
<path d="M806.40 416.12 L809.60 419.31 L806.40 422.51 L803.20 419.31 Z" fill="#c8f4c0" stroke="#2a9a2a" stroke-width="1"/><path d="M804.90 420.81 L807.90 417.81" stroke="#2a9a2a" stroke-width="0.7"/>
<text x="810.60" y="413.81" font-family="Liberation Sans, sans-serif" font-size="7.7" fill="#111" stroke="#111" stroke-width="0.1" textLength="8.0" lengthAdjust="spacingAndGlyphs">90</text>
<path d="M829.90 420.60 L833.10 423.80 L829.90 427.00 L826.70 423.80 Z" fill="#c8f4c0" stroke="#2a9a2a" stroke-width="1"/><path d="M828.40 425.30 L831.40 422.30" stroke="#2a9a2a" stroke-width="0.7"/>
<text x="834.10" y="418.30" font-family="Liberation Sans, sans-serif" font-size="7.7" fill="#111" stroke="#111" stroke-width="0.1" textLength="8.0" lengthAdjust="spacingAndGlyphs">85</text>
<path d="M853.40 417.01 L856.60 420.21 L853.40 423.41 L850.20 420.21 Z" fill="#c8f4c0" stroke="#2a9a2a" stroke-width="1"/><path d="M851.90 421.71 L854.90 418.71" stroke="#2a9a2a" stroke-width="0.7"/>
<text x="857.60" y="414.71" font-family="Liberation Sans, sans-serif" font-size="7.7" fill="#111" stroke="#111" stroke-width="0.1" textLength="8.0" lengthAdjust="spacingAndGlyphs">89</text>
<rect x="464.8" y="629" width="9.6" height="9.6" rx="2" fill="#1a5fc8"/><path d="M467 633.8 L468.9 635.8 L472.4 631.8" stroke="#fff" stroke-width="1" fill="none"/>
<g transform="translate(884.6,610.4) scale(1.03)">
<path d="M9 0.6 H21.6 V19.4 H9 Z" fill="#fafafa" stroke="#1a1a1a" stroke-width="1.1"/>
<path d="M0.6 19.6 H24.6 V24.6 H0.6 Z" fill="#c2d2f2" stroke="#222" stroke-width="0.8"/><path d="M1.2 24 L6 20.2 H13 L8 24Z" fill="#dfe8fa"/>
<path d="M15 5.4 L21.9 0.5 V19.6 L15 24.6 Z" fill="#a4a4a4" stroke="#111" stroke-width="1"/>
<path d="M16.2 6.6 L20.6 3.4 V18.8 L16.2 22 Z" fill="#c8c8c8"/>
<path d="M19.6 3 L21.2 1.8 V19.2 L19.6 20.4Z" fill="#7c7c7c"/>
<circle cx="18.2" cy="13" r="1.1" fill="#555" stroke="#111" stroke-width="0.4"/>
<path d="M0.8 7.4 H6.8 V3.8 L13.4 9.6 L6.8 15.6 V11.8 H0.8 Z" fill="#ececec" stroke="#111" stroke-width="1" stroke-linejoin="round"/>
<path d="M7.4 11.4 L12.4 9.6 L7.4 14.6Z" fill="#b4b4b4"/>
<path d="M7.2 4.2 L13 9.2" stroke="#207878" stroke-width="0.9"/>
</g>
<rect x="917.0" y="664.2" width="1.5" height="1.5" fill="#9a9a9a"/>
<rect x="920.1" y="664.2" width="1.5" height="1.5" fill="#9a9a9a"/>
<rect x="923.2" y="664.2" width="1.5" height="1.5" fill="#9a9a9a"/>
<rect x="920.1" y="661.0" width="1.5" height="1.5" fill="#9a9a9a"/>
<rect x="923.2" y="661.0" width="1.5" height="1.5" fill="#9a9a9a"/>
<rect x="923.2" y="657.8" width="1.5" height="1.5" fill="#9a9a9a"/>
</svg>
</div>
</body></html>
